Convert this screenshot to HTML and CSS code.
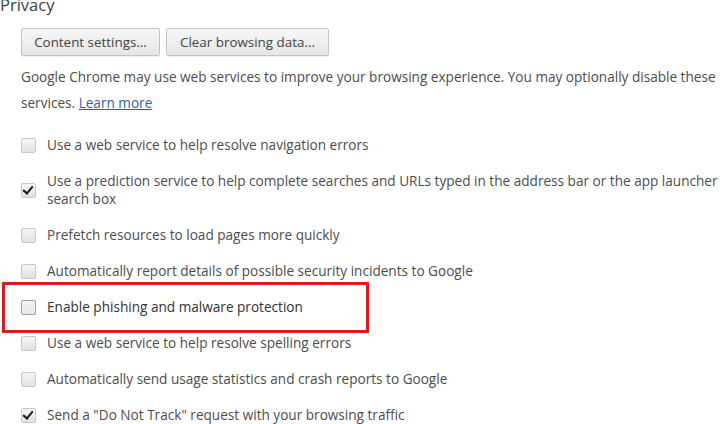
FILE: index.html
```html
<!DOCTYPE html>
<html>
<head>
<meta charset="utf-8">
<link rel="stylesheet" href="styles.css">
</head>
<body>
<section class="privacy">
  <h3 class="title">Privacy</h3>
  <div class="body">
    <div class="buttons">
      <button class="btn">Content settings...</button>
      <button class="btn">Clear browsing data...</button>
    </div>
    <p class="desc">Google Chrome may use web services to improve your browsing experience. You may optionally disable these<br>services. <a class="link" href="#">Learn more</a></p>
    <ul class="options">
      <li class="opt"><span class="cb"></span><span class="label">Use a web service to help resolve navigation errors</span></li>
      <li class="opt"><span class="cb checked"></span><span class="label">Use a prediction service to help complete searches and URLs typed in the address bar or the app launcher<br>search box</span></li>
      <li class="opt"><span class="cb"></span><span class="label">Prefetch resources to load pages more quickly</span></li>
      <li class="opt"><span class="cb"></span><span class="label">Automatically report details of possible security incidents to Google</span></li>
      <li class="opt highlighted"><span class="cb focus"></span><span class="label dark">Enable phishing and malware protection</span><span class="mark"></span></li>
      <li class="opt"><span class="cb"></span><span class="label">Use a web service to help resolve spelling errors</span></li>
      <li class="opt"><span class="cb"></span><span class="label">Automatically send usage statistics and crash reports to Google</span></li>
      <li class="opt"><span class="cb checked"></span><span class="label">Send a "Do Not Track" request with your browsing traffic</span></li>
    </ul>
  </div>
</section>
</body>
</html>
```
FILE: styles.css
```css
html, body {
  margin: 0;
  padding: 0;
  background: #fff;
  overflow: hidden;
  width: 720px;
  height: 424px;
}
body {
  font-family: "Open Sans", "Noto Sans", sans-serif;
  font-size: 13.6px;
  color: #4d4d4d;
}
.privacy {
  margin-top: -6px;
}
.title {
  margin: 0;
  font-size: 16.5px;
  font-weight: normal;
  line-height: 22px;
  color: #3a3f48;
  white-space: nowrap;
}
.body {
  padding-left: 21px;
  width: 760px;
}
.buttons {
  display: flex;
  gap: 6px;
  margin-top: 12px;
}
.btn {
  font-family: inherit;
  font-size: 13.4px;
  color: #444;
  height: 28px;
  padding: 0 10px;
  border: 1px solid #c4c4c4;
  border-radius: 2px;
  background: linear-gradient(#f7f7f7, #e6e6e6);
  box-shadow: 0 1px 0 rgba(0,0,0,0.06);
}
.btn:first-child { width: 139px; }
.btn:last-child { width: 163px; }
.desc {
  margin: 8px 0 0;
  line-height: 26px;
  white-space: nowrap;
}
.link {
  color: #2f5fb3;
  text-decoration: underline;
}
.options {
  list-style: none;
  margin: 11px 0 0;
  padding: 0;
}
.opt {
  position: relative;
  display: flex;
  align-items: center;
  padding: 9px 0;
  line-height: 18px;
  white-space: nowrap;
}
.cb {
  flex: none;
  width: 13px;
  height: 13px;
  border: 1px solid #c8c8c8;
  border-radius: 2px;
  background: linear-gradient(#f6f6f6, #e2e2e2);
  margin-right: 11px;
  position: relative;
}
.cb.focus {
  border-color: #8ea3cf;
  background: linear-gradient(#f4f4f4, #e6e6e6);
}
.cb.checked::after {
  content: "";
  position: absolute;
  left: 3px;
  top: 0px;
  width: 4px;
  height: 8px;
  border: solid #1a1a1a;
  border-width: 0 2.5px 2.5px 0;
  transform: rotate(40deg);
}
.label.dark {
  color: #333;
}
.mark {
  position: absolute;
  left: -19px;
  top: -7px;
  width: 361px;
  height: 45px;
  border: 3px solid #dc1a22;
}
```
